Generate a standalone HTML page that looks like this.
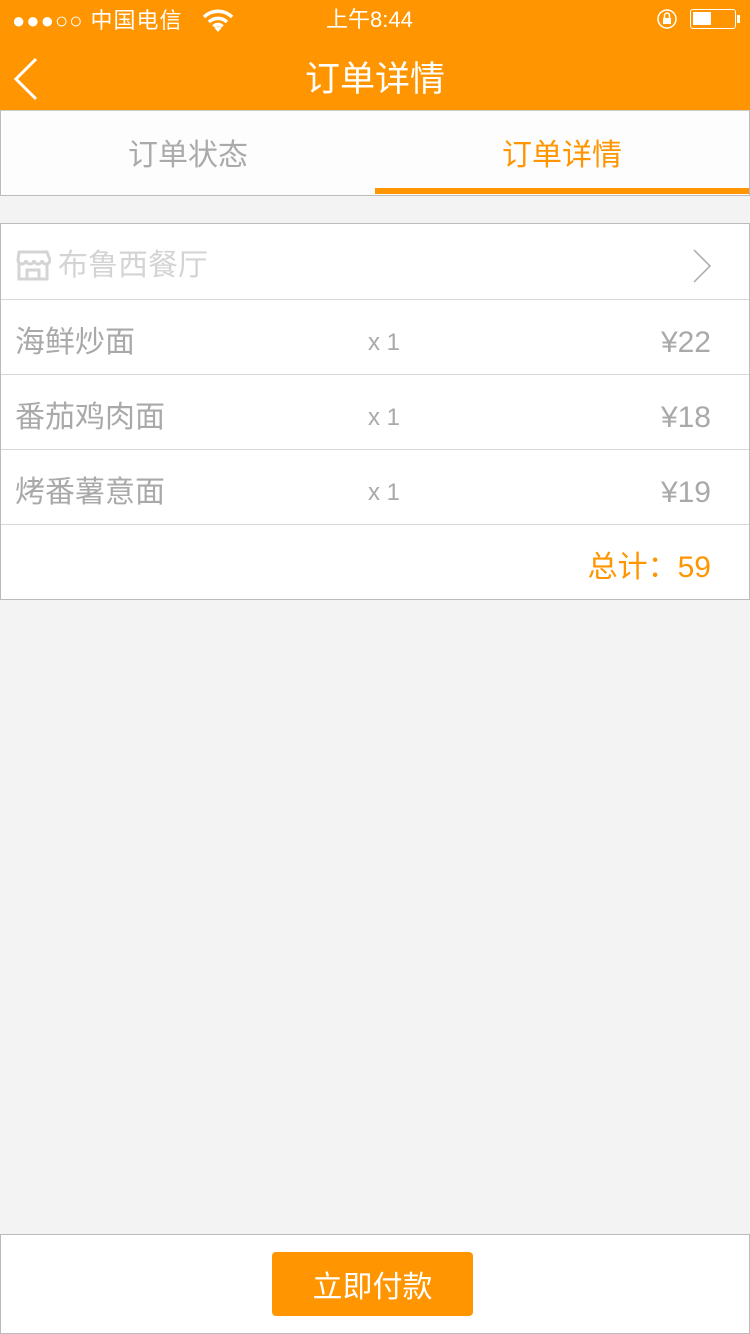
<!DOCTYPE html>
<html><head><meta charset="utf-8"><style>
*{margin:0;padding:0;box-sizing:border-box}
body{width:750px;height:1334px;background:#f3f3f3;font-family:"Liberation Sans","Noto Sans CJK SC",sans-serif;position:relative;overflow:hidden}
.top{position:absolute;left:0;top:0;width:750px;height:110px;background:#ff9500;color:#fff}
.abs{position:absolute}
.tabs{position:absolute;top:110px;left:0;width:750px;height:86px;background:#fdfdfd;border:1px solid #bbb;border-top:1px solid #ccc}
.list{position:absolute;top:223px;left:0;width:750px;height:377px;background:#fff;border:1px solid #bbb}
.row{position:absolute;left:0;width:748px;height:75px;border-top:1px solid #d8d8d8;font-size:30px;color:#a9a9a9}
.row span{position:absolute;top:6px;line-height:74px;height:74px}
.bottom{position:absolute;top:1234px;left:0;width:750px;height:100px;background:#fff;border:1px solid #bbb}
</style></head><body>
<div class="top">
 <div class="abs" style="left:12px;top:1px;line-height:40px;font-size:22px;letter-spacing:1px">●●●○○ 中国电信</div>
 <svg class="abs" style="left:202px;top:8px" width="32" height="24" viewBox="0 0 32 24"><path d="M2 9a20 20 0 0 1 28 0M7 14a13 13 0 0 1 18 0M11.5 18.5a6 6 0 0 1 9 0" stroke="#fff" stroke-width="3.5" fill="none"/><path d="M16 24l-3.5-4a5 5 0 0 1 7 0z" fill="#fff"/></svg>
 <div class="abs" style="left:326px;top:1px;line-height:38px;font-size:22px">上午8:44</div>
 <svg class="abs" style="left:656px;top:8px" width="26" height="22"><circle cx="11" cy="11" r="9" stroke="#fff" stroke-width="1.5" fill="none"/><rect x="7" y="10" width="8" height="6" fill="#fff"/><path d="M8.5 10V7.5a2.5 2.5 0 0 1 5 0V10" stroke="#fff" stroke-width="1.5" fill="none"/></svg>
 <div class="abs" style="left:690px;top:9px;width:46px;height:20px;border:1.5px solid #fff;border-radius:3px"><div style="margin:2px;width:18px;height:13px;background:#fff"></div></div>
 <div class="abs" style="left:737px;top:15px;width:3px;height:8px;background:#fff"></div>
 <svg class="abs" style="left:10px;top:57px" width="30" height="44"><path d="M26 2L6 22l20 20" stroke="#fff" stroke-width="3" fill="none"/></svg>
 <div class="abs" style="left:0;width:750px;top:57px;line-height:46px;text-align:center;font-size:35px">订单详情</div>
</div>
<div class="tabs">
 <div class="abs" style="left:0;width:374px;top:25px;line-height:40px;text-align:center;font-size:30px;color:#aaa">订单状态</div>
 <div class="abs" style="left:374px;width:374px;top:25px;line-height:40px;text-align:center;font-size:30px;color:#ff9500">订单详情</div>
 <div class="abs" style="left:374px;width:374px;top:77px;height:6px;background:#ff9500"></div>
</div>
<div class="list">
 <div class="row" style="top:0;border-top:none;color:#d4d4d4">
  <svg class="abs" style="left:14px;top:25px" width="36" height="32" viewBox="0 0 36 32"><path d="M4 3h28l3 8a4 4 0 0 1-8 0 4 4 0 0 1-8 0 4 4 0 0 1-8 0 4 4 0 0 1-8 0zM4 14v16h28V14M12 30v-9h12v9" stroke="#d4d4d4" stroke-width="3" fill="none"/></svg>
  <span style="left:57px;top:5px">布鲁西餐厅</span>
  <svg class="abs" style="left:690px;top:24px" width="22" height="36"><path d="M3 2l16 16L3 34" stroke="#aaa" stroke-width="1.5" fill="none"/></svg>
 </div>
 <div class="row" style="top:75px"><span style="left:14px">海鲜炒面</span><span style="left:367px;font-size:24px">x 1</span><span style="right:38px">¥22</span></div>
 <div class="row" style="top:150px"><span style="left:14px">番茄鸡肉面</span><span style="left:367px;font-size:24px">x 1</span><span style="right:38px">¥18</span></div>
 <div class="row" style="top:225px"><span style="left:14px">烤番薯意面</span><span style="left:367px;font-size:24px">x 1</span><span style="right:38px">¥19</span></div>
 <div class="row" style="top:300px;color:#ff9500"><span style="right:38px">总计：59</span></div>
</div>
<div class="bottom">
 <div class="abs" style="left:271px;top:17px;width:201px;height:64px;background:#ff9500;border-radius:4px;color:#fff;font-size:30px;text-align:center;line-height:72px">立即付款</div>
</div>
</body></html>
